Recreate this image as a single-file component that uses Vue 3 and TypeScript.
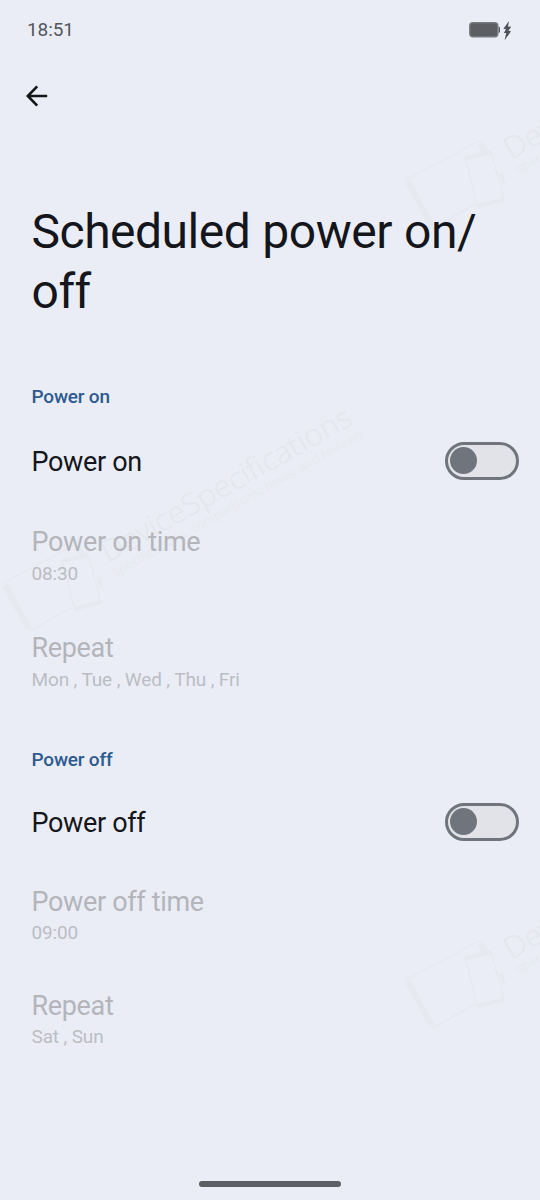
<script setup lang="ts">
import { ref } from 'vue'

interface Row {
  id: string
  title: string
  summary?: string
}
interface Section {
  id: string
  heading: string
  rows: Row[]
}

const sections: Section[] = [
  {
    id: 'on',
    heading: 'Power on',
    rows: [
      { id: 'toggle', title: 'Power on' },
      { id: 'time', title: 'Power on time', summary: '08:30' },
      { id: 'repeat', title: 'Repeat', summary: 'Mon , Tue , Wed , Thu , Fri' },
    ],
  },
  {
    id: 'off',
    heading: 'Power off',
    rows: [
      { id: 'toggle', title: 'Power off' },
      { id: 'time', title: 'Power off time', summary: '09:00' },
      { id: 'repeat', title: 'Repeat', summary: 'Sat , Sun' },
    ],
  },
]

const enabled = ref<Record<string, boolean>>({ on: false, off: false })

const marks = [
  { x: 405, y: 180 },
  { x: 2, y: 583 },
  { x: 405, y: 980 },
]
</script>

<template>
  <div class="screen">
    <svg class="watermark" width="540" height="1200" viewBox="0 0 540 1200" aria-hidden="true">
      <g v-for="m in marks" :key="`${m.x}-${m.y}`" :transform="`translate(${m.x} ${m.y})`">
        <path class="line" d="M1 0 L76 -40 M28 48 L70 24" />
        <path class="edge" d="M3 2 L27 46" />
        <path class="edge" d="M75 -37 L81 -27" />
        <path class="line" d="M60 -22 L86 -28 L99 19 L73 27 Z" />
        <path class="edge thin" d="M60 -22 L86 -28 M73 26 L99 19 M96 -6 L99 4" />
        <g transform="translate(106 -20) rotate(-29.5)">
          <text class="brand" x="0" y="0" textLength="283" lengthAdjust="spacingAndGlyphs">DeviceSpecifications</text>
          <text class="tag" x="0" y="16" textLength="285" lengthAdjust="spacingAndGlyphs">specifications, comparisons, news, and reviews</text>
        </g>
      </g>
    </svg>

    <header class="status">
      <span class="clock">18:51</span>
      <svg class="battery" width="44" height="22" viewBox="0 0 44 22">
        <rect x="0.8" y="3.8" width="28" height="14" rx="3" fill="#5c5e63" stroke="#77797e" stroke-width="1.4" />
        <path d="M29.6 7.6 Q31 7.8 31 9 V12.6 Q31 13.8 29.6 14 Z" fill="#5c5e63" />
        <path d="M40 1.9 L34.4 9.7 L37 10.3 L34.8 13.9 L37.2 14.1 L35.6 21.3 L42 12.3 L39.4 11.7 L42.2 7.7 L39 7.5 Z" fill="#505257" />
      </svg>
    </header>

    <button class="back" type="button" aria-label="Back">
      <svg width="22" height="22" viewBox="0 0 22 22">
        <path d="M21.2 11 H2.2 M11.2 1.3 L1.8 11 L11.2 20.7" fill="none" stroke="#14161a" stroke-width="2.6" />
      </svg>
    </button>

    <h1 class="title">Scheduled power on/<br />off</h1>

    <section v-for="s in sections" :key="s.id" class="section" :class="s.id">
      <h2 class="heading">{{ s.heading }}</h2>
      <div v-for="r in s.rows" :key="r.id" class="row" :class="r.id">
        <div class="texts">
          <div class="name">{{ r.title }}</div>
          <div v-if="r.summary" class="summary">{{ r.summary }}</div>
        </div>
        <button
          v-if="r.id === 'toggle'"
          type="button"
          role="switch"
          class="switch"
          :class="{ checked: enabled[s.id] }"
          :aria-checked="enabled[s.id]"
          @click="enabled[s.id] = !enabled[s.id]"
        >
          <span class="thumb"></span>
        </button>
      </div>
    </section>

    <div class="handle"></div>
  </div>
</template>

<style>
body {
  margin: 0;
  background: #eaedf5;
}
</style>

<style scoped>
.screen {
  position: relative;
  box-sizing: border-box;
  width: 540px;
  height: 1200px;
  padding: 19px 21px 13px 31.5px;
  display: flex;
  flex-direction: column;
  overflow: hidden;
  background: #eaedf5;
  font-family: Roboto, "Liberation Sans", sans-serif;
  color: #14161b;
}
.screen > :not(.watermark) {
  z-index: 1;
}
.watermark {
  position: absolute;
  top: 0;
  left: 0;
  font-family: "Open Sans", "Noto Sans", sans-serif;
}
.line {
  fill: none;
  stroke: #e5e8ef;
  stroke-width: 1.2;
}
.edge {
  fill: none;
  stroke: #e6e9f0;
  stroke-width: 6;
}
.edge.thin {
  stroke-width: 4;
}
.brand {
  font-size: 30px;
  font-weight: 300;
  fill: #e3e6ed;
}
.tag {
  font-size: 12.5px;
  fill: #e6e9f0;
}
.status {
  height: 22px;
  margin: 0 6px 0 -4.5px;
  display: flex;
  justify-content: space-between;
}
.clock {
  font-size: 19px;
  line-height: 22px;
  font-weight: 400;
  letter-spacing: -0.1px;
  color: #55575c;
}
.battery {
  display: block;
}
button {
  appearance: none;
  border: 0;
  padding: 0;
  background: none;
}
.back {
  width: 22px;
  height: 22px;
  margin: 44px 0 0 -5.5px;
}
.back svg {
  display: block;
}
.title {
  margin: 95px 0 0;
  font-size: 48px;
  line-height: 60px;
  font-weight: 400;
  letter-spacing: -0.5px;
  word-spacing: 0.7px;
  white-space: nowrap;
}
.heading {
  margin: 0;
  font-size: 19px;
  line-height: 22px;
  font-weight: 500;
  letter-spacing: -0.2px;
  color: #2d5a8f;
}
.section.on {
  margin-top: 64px;
}
.section.off {
  margin-top: 58px;
}
.row {
  display: flex;
  align-items: center;
  justify-content: space-between;
}
.name {
  font-size: 27px;
  line-height: 32px;
  letter-spacing: -0.34px;
}
.summary {
  margin-top: 5px;
  font-size: 19px;
  line-height: 22px;
  letter-spacing: -0.13px;
  color: #bbbdc4;
}
.off .summary {
  margin-top: 4px;
}
.time .name,
.repeat .name {
  color: #b3b5bb;
}
.toggle {
  height: 32px;
}
.on .toggle {
  margin-top: 38px;
}
.on .time {
  margin-top: 48px;
}
.on .repeat {
  margin-top: 47px;
}
.off .toggle {
  margin-top: 36px;
}
.off .time {
  margin-top: 47px;
}
.off .repeat {
  margin-top: 46px;
}
.switch {
  box-sizing: border-box;
  width: 74px;
  height: 38px;
  margin-top: -3px;
  padding-left: 2px;
  border: 3px solid #70747d;
  border-radius: 19px;
  background: #e2e3e9;
  display: flex;
  align-items: center;
}
.switch.checked {
  justify-content: flex-end;
  padding: 0 2px 0 0;
}
.thumb {
  width: 27px;
  height: 27px;
  border-radius: 50%;
  background: #70747d;
}
.handle {
  width: 142px;
  height: 6px;
  margin: auto 0 0 167px;
  border-radius: 3px;
  background: #5d5f65;
}
</style>
